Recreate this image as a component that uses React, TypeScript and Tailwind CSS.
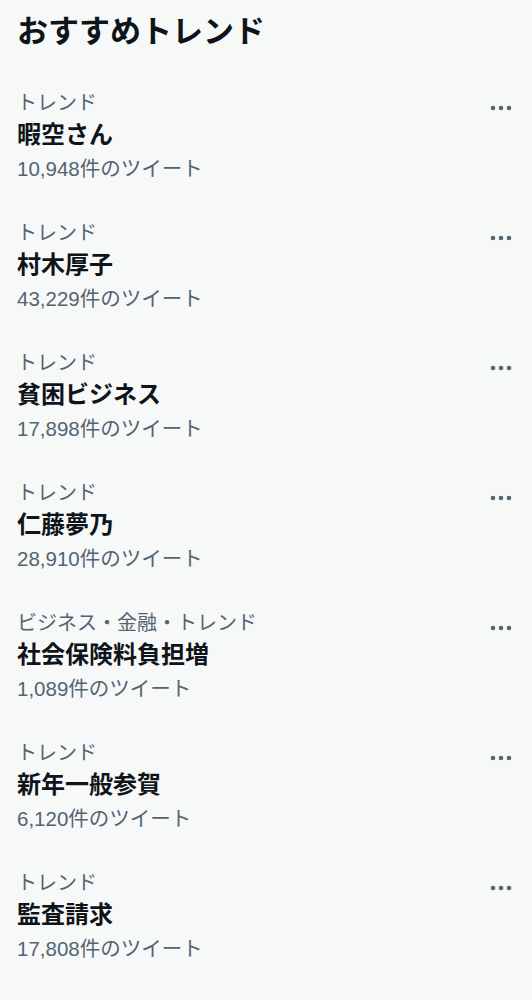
type Trend = {
  category: string;
  title: string;
  count: string;
};

const trends: Trend[] = [
  { category: "トレンド", title: "暇空さん", count: "10,948件のツイート" },
  { category: "トレンド", title: "村木厚子", count: "43,229件のツイート" },
  { category: "トレンド", title: "貧困ビジネス", count: "17,898件のツイート" },
  { category: "トレンド", title: "仁藤夢乃", count: "28,910件のツイート" },
  { category: "ビジネス・金融・トレンド", title: "社会保険料負担増", count: "1,089件のツイート" },
  { category: "トレンド", title: "新年一般参賀", count: "6,120件のツイート" },
  { category: "トレンド", title: "監査請求", count: "17,808件のツイート" },
];

function MoreIcon() {
  return (
    <svg width="24" height="8" viewBox="0 0 24 8" className="text-[#536471]" fill="currentColor">
      <circle cx="4" cy="4" r="2.3" />
      <circle cx="12" cy="4" r="2.3" />
      <circle cx="20" cy="4" r="2.3" />
    </svg>
  );
}

export default function App() {
  return (
    <div
      className="min-h-[1000px] w-full bg-[#f7f9f9] text-[#0f1419]"
      style={{ fontFamily: '"Liberation Sans", "Noto Sans CJK JP", sans-serif' }}
    >
      {/* header */}
      <div className="px-[17px] pt-[12px] pb-[22px]">
        <h2 className="text-[31px] font-bold leading-[40px]">おすすめトレンド</h2>
      </div>

      {/* trends */}
      <div className="flex flex-col">
        {trends.map((trend) => (
          <div key={trend.title} className="relative h-[130px] px-[17px] pt-[13px]">
            <div className="absolute right-[19px] top-[30px]">
              <MoreIcon />
            </div>
            <p className="text-[20px] leading-[32px] text-[#536471]">{trend.category}</p>
            <p className="text-[24px] font-bold leading-[32px]">{trend.title}</p>
            <p className="text-[20.5px] leading-[36px] text-[#536471]">{trend.count}</p>
          </div>
        ))}
      </div>
    </div>
  );
}
